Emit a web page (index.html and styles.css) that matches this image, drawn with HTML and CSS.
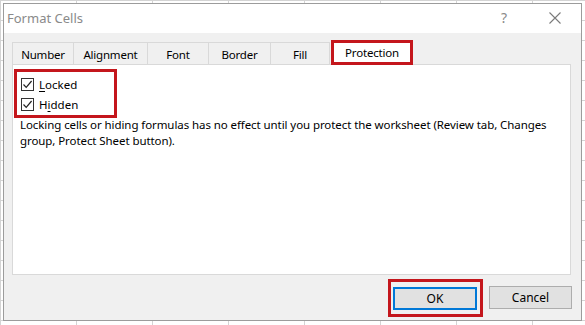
FILE: index.html
```html
<!DOCTYPE html>
<html>
<head>
<meta charset="utf-8">
<link rel="stylesheet" href="styles.css">
</head>
<body>
<div class="page">
  <div class="dialog">
    <div class="titlebar">
      <span class="title">Format Cells</span>
      <span class="help">?</span>
      <span class="close"><svg width="12" height="12" viewBox="0 0 12 12"><path d="M0.5 0.5 L11.5 11.5 M11.5 0.5 L0.5 11.5" stroke="#7a7a7a" stroke-width="1.1" fill="none"/></svg></span>
    </div>
    <div class="body">
      <div class="tabs">
        <div class="tab t-number">Number</div>
        <div class="tab t-align">Alignment</div>
        <div class="tab t-font">Font</div>
        <div class="tab t-border">Border</div>
        <div class="tab t-fill">Fill</div>
        <div class="tab active t-prot">Protection</div>
      </div>
      <div class="panel">
        <div class="checks">
          <div class="check"><span class="box"><svg width="11" height="11" viewBox="0 0 11 11"><path d="M1.5 5.5 L4.2 8.3 L9.6 2" stroke="#222" stroke-width="1.2" fill="none"/></svg></span><span class="label"><u>L</u>ocked</span></div>
          <div class="check"><span class="box"><svg width="11" height="11" viewBox="0 0 11 11"><path d="M1.5 5.5 L4.2 8.3 L9.6 2" stroke="#222" stroke-width="1.2" fill="none"/></svg></span><span class="label">H<u>i</u>dden</span></div>
        </div>
        <p class="desc">Locking cells or hiding formulas has no effect until you protect the worksheet (Review tab, Changes group, Protect Sheet button).</p>
      </div>
      <div class="footer">
        <div class="ok-mark"><button class="btn ok">OK</button></div>
        <button class="btn cancel">Cancel</button>
      </div>
    </div>
  </div>
</div>
</body>
</html>
```
FILE: styles.css
```css
html, body {
  margin: 0;
  padding: 0;
}
body {
  width: 585px;
  height: 325px;
  overflow: hidden;
  background-color: #ffffff;
  background-image:
    linear-gradient(to right, #d4d4d4 1px, transparent 1px),
    linear-gradient(to bottom, #d4d4d4 1px, transparent 1px);
  background-size: 76px 20px;
  background-position: 0 0, 0 0;
  font-family: "Noto Sans", "Open Sans", sans-serif;
  font-size: 11.5px;
  color: #000;
}
.page {
  padding: 3px 0 0 3px;
}
.dialog {
  width: 579px;
  height: 318px;
  box-sizing: border-box;
  border: 1px solid #9c9c9c;
  background: #f0f0f0;
  display: flex;
  flex-direction: column;
}
.titlebar {
  height: 29px;
  background: #ffffff;
  display: flex;
  align-items: center;
  padding: 0 0 0 3px;
  flex: none;
}
.title {
  font-size: 13px;
  color: #8a8a8a;
  flex: 1;
  position: relative;
  top: -1px;
}
.help {
  color: #8a8a8a;
  font-size: 14px;
  width: 20px;
  margin-right: 26px;
  position: relative;
  top: -1px;
  left: -2px;
}
.close {
  display: flex;
  margin-right: 20px;
  position: relative;
  top: -1px;
}
.body {
  flex: 1;
  display: flex;
  flex-direction: column;
  padding: 7px 10px 0 8px;
}
.tabs {
  display: flex;
  align-items: flex-end;
  height: 25px;
  position: relative;
  z-index: 2;
}
.tab {
  box-sizing: border-box;
  height: 22px;
  border: 1px solid #d9d9d9;
  border-bottom: none;
  border-right: none;
  background: #f0f0f0;
  display: flex;
  align-items: center;
  justify-content: center;
  padding-top: 2px;
  margin-bottom: 1px;
  letter-spacing: -0.2px;
}
.t-number { width: 61px; }
.t-align { width: 74px; }
.t-font { width: 61px; }
.t-border { width: 62px; }
.t-fill { width: 60px; border-right: 1px solid #d9d9d9; }
.tab.active {
  width: 82px;
  height: 25px;
  margin-left: 1px;
  margin-bottom: 0;
  background: #ffffff;
  border: 3px solid #c4161c;
  padding-top: 0;
  padding-bottom: 1px;
}
.panel {
  height: 211px;
  box-sizing: border-box;
  background: #ffffff;
  border: 1px solid #d9d9d9;
  margin-top: -1px;
  position: relative;
  z-index: 1;
  flex: none;
}
.checks {
  width: 103px;
  height: 49px;
  box-sizing: border-box;
  border: 3px solid #c4161c;
  margin: 4px 0 0 1px;
  padding: 2px 0 0 4px;
}
.check {
  height: 20px;
  display: flex;
  align-items: center;
}
.box {
  width: 13px;
  height: 13px;
  box-sizing: border-box;
  border: 1px solid #333333;
  background: #fff;
  display: flex;
  align-items: center;
  justify-content: center;
  margin-right: 5px;
}
.label u {
  text-decoration-thickness: 1px;
  text-underline-offset: 2px;
}
.desc {
  margin: 0;
  padding: 0 4px 0 7px;
  line-height: 16px;
  letter-spacing: -0.08px;
  position: relative;
  top: -1px;
}
.footer {
  flex: 1;
  display: flex;
  justify-content: flex-end;
  align-items: center;
  margin-right: -1px;
}
.ok-mark {
  border: 3px solid #c4161c;
  padding: 5px 3px 4px 2px;
  margin-right: 6px;
  display: flex;
}
.btn {
  font-family: inherit;
  font-size: 12px;
  color: #000;
  background: #e1e1e1;
  height: 23px;
  box-sizing: border-box;
  padding: 0;
  margin: 0;
  border-radius: 0;
}
.ok {
  width: 84px;
  border: 2px solid #0078d7;
}
.cancel {
  width: 83px;
  border: 1px solid #adadad;
}
```
